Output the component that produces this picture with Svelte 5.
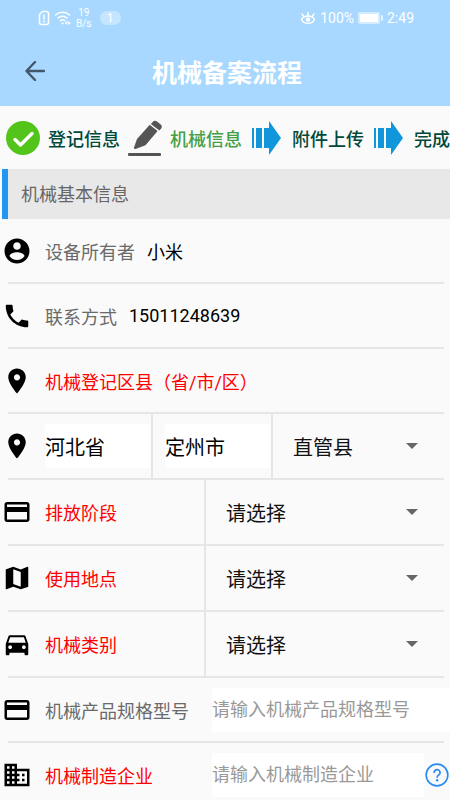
<script lang="ts">
	type Field = {
		id: string;
		icon: string;
		label: string;
		required?: boolean;
		kind: 'text' | 'heading' | 'region' | 'select' | 'input';
		value?: string;
		placeholder?: string;
		help?: boolean;
	};

	// 24x24 icon shapes
	const ICONS: Record<string, string> = {
		account:
			'M12 2C6.48 2 2 6.48 2 12s4.48 10 10 10 10-4.48 10-10S17.52 2 12 2zm0 3c1.66 0 3 1.34 3 3s-1.34 3-3 3-3-1.34-3-3 1.34-3 3-3zm0 14.2c-2.5 0-4.71-1.28-6-3.22.03-1.99 4-3.08 6-3.08 1.99 0 5.97 1.09 6 3.08-1.29 1.94-3.5 3.22-6 3.22z',
		phone:
			'M6.62 10.79c1.44 2.83 3.76 5.14 6.59 6.59l2.2-2.2c.27-.27.67-.36 1.02-.24 1.12.37 2.33.57 3.57.57.55 0 1 .45 1 1V20c0 .55-.45 1-1 1-9.39 0-17-7.61-17-17 0-.55.45-1 1-1h3.5c.55 0 1 .45 1 1 0 1.25.2 2.45.57 3.57.11.35.03.74-.25 1.02l-2.2 2.2z',
		place:
			'M12 2C8.13 2 5 5.13 5 9c0 5.25 7 13 7 13s7-7.75 7-13c0-3.87-3.13-7-7-7zm0 9.5c-1.38 0-2.5-1.12-2.5-2.5s1.12-2.5 2.5-2.5 2.5 1.12 2.5 2.5-1.12 2.5-2.5 2.5z',
		card: 'M20 4H4c-1.11 0-1.99.89-1.99 2L2 18c0 1.11.89 2 2 2h16c1.11 0 2-.89 2-2V6c0-1.11-.89-2-2-2zm0 14H4v-6h16v6zm0-10H4V6h16v2z',
		map: 'M20.5 3l-.16.03L15 5.1 9 3 3.36 4.9c-.21.07-.36.25-.36.48V20.5c0 .28.22.5.5.5l.16-.03L9 18.9l6 2.1 5.64-1.9c.21-.07.36-.25.36-.48V3.5c0-.28-.22-.5-.5-.5zM15 19l-6-2.11V5l6 2.11V19z',
		car: 'M18.92 6.01C18.72 5.42 18.16 5 17.5 5h-11c-.66 0-1.21.42-1.42 1.01L3 12v8c0 .55.45 1 1 1h1c.55 0 1-.45 1-1v-1h12v1c0 .55.45 1 1 1h1c.55 0 1-.45 1-1v-8l-2.08-5.99zM6.5 16c-.83 0-1.5-.67-1.5-1.5S5.67 13 6.5 13s1.5.67 1.5 1.5S7.33 16 6.5 16zm11 0c-.83 0-1.5-.67-1.5-1.5s.67-1.5 1.5-1.5 1.5.67 1.5 1.5-.67 1.5-1.5 1.5zM5 11l1.5-4.5h11L19 11H5z',
		business:
			'M12 7V3H2v18h20V7H12zM6 19H4v-2h2v2zm0-4H4v-2h2v2zm0-4H4V9h2v2zm0-4H4V5h2v2zm4 12H8v-2h2v2zm0-4H8v-2h2v2zm0-4H8V9h2v2zm0-4H8V5h2v2zm10 12h-8v-2h2v-2h-2v-2h2v-2h-2V9h8v10zm-2-8h-2v2h2v-2zm0 4h-2v2h2v-2z'
	};

	const STEPS = [
		{ icon: 'done', label: '登记信息' },
		{ icon: 'edit', label: '机械信息', current: true },
		{ icon: 'next', label: '附件上传' },
		{ icon: 'next', label: '完成' }
	];

	const FIELDS: Field[] = [
		{ id: 'owner', icon: 'account', label: '设备所有者', kind: 'text', value: '小米' },
		{ id: 'phone', icon: 'phone', label: '联系方式', kind: 'text', value: '15011248639' },
		{ id: 'area', icon: 'place', label: '机械登记区县（省/市/区）', required: true, kind: 'heading' },
		{ id: 'region', icon: 'place', label: '', kind: 'region' },
		{ id: 'stage', icon: 'card', label: '排放阶段', required: true, kind: 'select' },
		{ id: 'site', icon: 'map', label: '使用地点', required: true, kind: 'select' },
		{ id: 'type', icon: 'car', label: '机械类别', required: true, kind: 'select' },
		{ id: 'spec', icon: 'card', label: '机械产品规格型号', kind: 'input', placeholder: '请输入机械产品规格型号' },
		{
			id: 'maker',
			icon: 'business',
			label: '机械制造企业',
			required: true,
			kind: 'input',
			placeholder: '请输入机械制造企业',
			help: true
		}
	];

	let province = $state('河北省');
	let city = $state('定州市');
	let values = $state<Record<string, string>>({ spec: '', maker: '' });
</script>

{#snippet dropdown(id: string, option: string, name: string)}
	<div class="dropdown">
		<select {id} aria-label={name}>
			<option>{option}</option>
		</select>
		<svg class="caret" viewBox="0 0 12 6" aria-hidden="true"><path d="M0 0h12L6 6z" /></svg>
	</div>
{/snippet}

<div class="page">
	<header>
		<div class="status">
			<svg class="sim" viewBox="0 0 12 16" aria-hidden="true">
				<path d="M4.5 1.5h4a2 2 0 0 1 2 2v9a2 2 0 0 1-2 2h-5a2 2 0 0 1-2-2v-8z" />
				<path d="M6 5v4M6 11v1" />
			</svg>
			<svg class="wifi" viewBox="0 0 18 16" aria-hidden="true">
				<path d="M1.5 5a10.500 10.500 0 0 1 14 0M4 8a6.800 6.800 0 0 1 9 0M6.300 10.800a3.600 3.600 0 0 1 4.600 0" />
				<path class="solid" d="M6.800 12.800l1.700 2 1.700-2zM13.300 11v4L10.800 13zM14.200 11v4L16.800 13z" />
			</svg>
			<div class="speed"><span>19</span><span>B/s</span></div>
			<span class="badge">1</span>
			<span class="spacer"></span>
			<svg class="eye" viewBox="0 0 16 16" aria-hidden="true">
				<path d="M1.500 9.500C4 4.800 12 4.800 14.500 9.500C12 14.500 4 14.500 1.500 9.500z" />
				<path d="M8 5.500V2.500M3.800 6.500L2 4M12.200 6.500L14 4" />
				<circle cx="8" cy="9.500" r="2.200" />
			</svg>
			<span>100%</span>
			<svg class="battery" viewBox="0 0 25 12" aria-hidden="true">
				<rect x="0" y="0" width="22" height="12" rx="2" opacity="0.5" />
				<rect x="2" y="2" width="18" height="8" />
				<rect x="23" y="3" width="2" height="6" rx="1" opacity="0.7" />
			</svg>
			<span>2:49</span>
		</div>
		<div class="nav">
			<button class="back" aria-label="返回">
				<svg viewBox="0 0 20 20" aria-hidden="true"><path d="M19 10H2M10 1L1.500 10L10 19" /></svg>
			</button>
			<h1>机械备案流程</h1>
		</div>
	</header>

	<ol class="steps">
		{#each STEPS as step}
			<li class:current={step.current}>
				{#if step.icon === 'done'}
					<svg viewBox="0 0 34 34" aria-hidden="true">
						<circle cx="17" cy="17" r="17" fill="#52c41a" />
						<path d="M9 18.500L14.500 24L26 12.500" fill="none" stroke="#fff" stroke-width="3.400" stroke-linecap="round" stroke-linejoin="round" />
					</svg>
				{:else if step.icon === 'edit'}
					<svg viewBox="0 0 34 34" fill="#555" aria-hidden="true">
						<path d="M22 3.500L30 9.500L17.500 24.300L7.500 28Q5.800 28.300 6 26.500L9 18z" />
						<path d="M24.500 1.200Q26.500-1.200 29 .500L33 3.800Q34.800 5.500 33.200 7.500L31.500 9.500L22.500 3.500z" />
						<path d="M21.800 3L31 10.300" stroke="#fafafa" stroke-width="1.300" />
						<rect x="0" y="32" width="33" height="3" rx="1" />
					</svg>
				{:else}
					<svg viewBox="0 0 34 34" fill="#1296db" aria-hidden="true">
						<path d="M2 7h2v20H2zM6 7h6v20H6zM14 7h5V0l12 17L19 34v-7h-5z" />
					</svg>
				{/if}
				<span>{step.label}</span>
			</li>
		{/each}
	</ol>

	<h2>机械基本信息</h2>

	<form>
		{#each FIELDS as f (f.id)}
			<div class="row {f.kind}">
				<svg class="icon" viewBox="0 0 24 24" aria-hidden="true"><path d={ICONS[f.icon]} /></svg>
				{#if f.kind === 'text'}
					<span class="label">{f.label}</span>
					<span class="value">{f.value}</span>
				{:else if f.kind === 'heading'}
					<span class="label required">{f.label}</span>
				{:else if f.kind === 'region'}
					<div class="region-cell"><input aria-label="省" bind:value={province} /></div>
					<div class="region-cell"><input aria-label="市" bind:value={city} /></div>
					{@render dropdown(f.id, '直管县', '区县')}
				{:else}
					<label class="label" class:required={f.required} for={f.id}>{f.label}</label>
					{#if f.kind === 'select'}
						{@render dropdown(f.id, '请选择', f.label)}
					{:else}
						<input id={f.id} placeholder={f.placeholder} bind:value={values[f.id]} />
					{/if}
				{/if}
				{#if f.help}
					<button type="button" class="help" aria-label="帮助">
						<svg viewBox="0 0 24 24" aria-hidden="true">
							<circle cx="12" cy="12" r="10" />
							<path d="M9.400 9.700a2.700 2.700 0 1 1 4 2.400C12.400 12.800 12.100 13.300 12.100 14" />
							<circle class="dot" cx="12.100" cy="16.800" r="1.100" />
						</svg>
					</button>
				{/if}
			</div>
			<hr />
		{/each}
	</form>
</div>

<style>
	:global(html) {
		scrollbar-width: none;
	}
	:global(body) {
		margin: 0;
		background: #fafafa;
	}
	.page {
		font-family: Roboto, 'Noto Sans CJK SC', sans-serif;
		font-size: 18px;
		color: #000;
	}
	svg {
		display: block;
		flex-shrink: 0;
	}
	button {
		padding: 0;
		border: 0;
		background: none;
	}

	header {
		background: #a8d8ff;
		color: #fff;
	}
	.status {
		display: flex;
		align-items: center;
		height: 36px;
		padding: 0 36px 0 38px;
		gap: 4px;
		font-size: 14px;
	}
	.status svg {
		fill: none;
		stroke: #fff;
		stroke-width: 1.5;
		stroke-linecap: round;
	}
	.sim {
		width: 12px;
		height: 16px;
	}
	.wifi {
		width: 18px;
		height: 16px;
	}
	.status .solid {
		fill: #fff;
		stroke: none;
	}
	.eye {
		width: 16px;
		height: 16px;
	}
	.status .eye circle {
		fill: #fff;
		stroke: none;
	}
	.status .battery {
		width: 25px;
		height: 12px;
		fill: #fff;
		stroke: none;
	}
	.speed {
		display: flex;
		flex-direction: column;
		align-items: center;
		margin: 0 4px 0 0;
		font-size: 10px;
		line-height: 11px;
	}
	.badge {
		width: 21px;
		border-radius: 7px;
		background: #c6e5ff;
		font-size: 12px;
		line-height: 14px;
		text-align: center;
	}
	.spacer {
		flex: 1;
	}
	.nav {
		display: grid;
		grid-template-columns: 74px 1fr 70px;
		align-items: center;
		height: 70px;
	}
	.back {
		display: flex;
		align-items: center;
		height: 48px;
		padding-left: 25px;
	}
	.back svg {
		width: 20px;
		height: 20px;
		fill: none;
		stroke: #46566a;
		stroke-width: 2.4;
		stroke-linecap: round;
		stroke-linejoin: round;
	}
	h1 {
		margin: 0;
		font-size: 25px;
		font-weight: 700;
		text-align: center;
		white-space: nowrap;
	}

	.steps {
		display: flex;
		align-items: center;
		gap: 8px;
		height: 63px;
		margin: 0;
		padding: 0 0 0 6px;
		list-style: none;
		overflow: hidden;
		color: #00493a;
		font-weight: 500;
		white-space: nowrap;
	}
	.steps li {
		display: flex;
		align-items: center;
		gap: 8px;
	}
	.steps svg {
		width: 34px;
		height: 34px;
		overflow: visible;
	}
	.steps .current {
		color: #43a047;
	}

	h2 {
		margin: 0 0 0 2px;
		padding: 2px 0 0 13px;
		border-left: 6px solid #2196f3;
		background: #e8e8e8;
		color: #666;
		font-size: 18px;
		font-weight: 400;
		line-height: 48px;
	}

	.row {
		display: flex;
		align-items: center;
		height: 63px;
		padding-left: 2px;
	}
	.row.region,
	.row.select {
		height: 64px;
	}
	hr {
		height: 2px;
		margin: 0 6px 0 8px;
		border: 0;
		background: #e6e6e6;
	}
	.icon {
		width: 30px;
		height: 30px;
		margin-right: 13px;
	}
	.label {
		color: #6a6a6a;
		white-space: nowrap;
	}
	.label.required {
		color: #f00;
	}
	.value {
		margin-left: 12px;
	}
	.select .label {
		width: 159px;
	}
	.input .label {
		width: 167px;
	}

	input {
		box-sizing: border-box;
		flex: 1;
		min-width: 0;
		width: 100%;
		height: 44px;
		padding: 0;
		border: 0;
		outline: none;
		background: #fff;
		color: #000;
		font: inherit;
	}
	input::placeholder {
		color: #999;
		opacity: 1;
	}
	.region-cell {
		box-sizing: border-box;
		display: flex;
		align-items: center;
		align-self: stretch;
		width: 108px;
		padding-right: 1px;
		border-right: 2px solid #e6e6e6;
	}
	.region-cell + .region-cell {
		width: 120px;
		padding-left: 12px;
	}
	.region-cell input {
		font-size: 20px;
	}
	.dropdown {
		position: relative;
		display: flex;
		flex: 1;
		align-self: stretch;
		margin-right: 6px;
	}
	.select .dropdown {
		border-left: 2px solid #e6e6e6;
	}
	select {
		width: 100%;
		padding: 3px 44px 0 20px;
		appearance: none;
		border: 0;
		outline: none;
		background: transparent;
		color: #111;
		font: inherit;
		font-size: 20px;
	}
	.caret {
		position: absolute;
		top: 50%;
		right: 26px;
		width: 12px;
		height: 6px;
		margin-top: -3px;
		fill: #666;
		pointer-events: none;
	}
	.help {
		flex-shrink: 0;
	}
	.help svg {
		width: 26px;
		height: 26px;
		fill: none;
		stroke: #2a8bf2;
		stroke-width: 1.5;
		stroke-linecap: round;
	}
	.help .dot {
		fill: #2a8bf2;
		stroke: none;
	}
</style>
